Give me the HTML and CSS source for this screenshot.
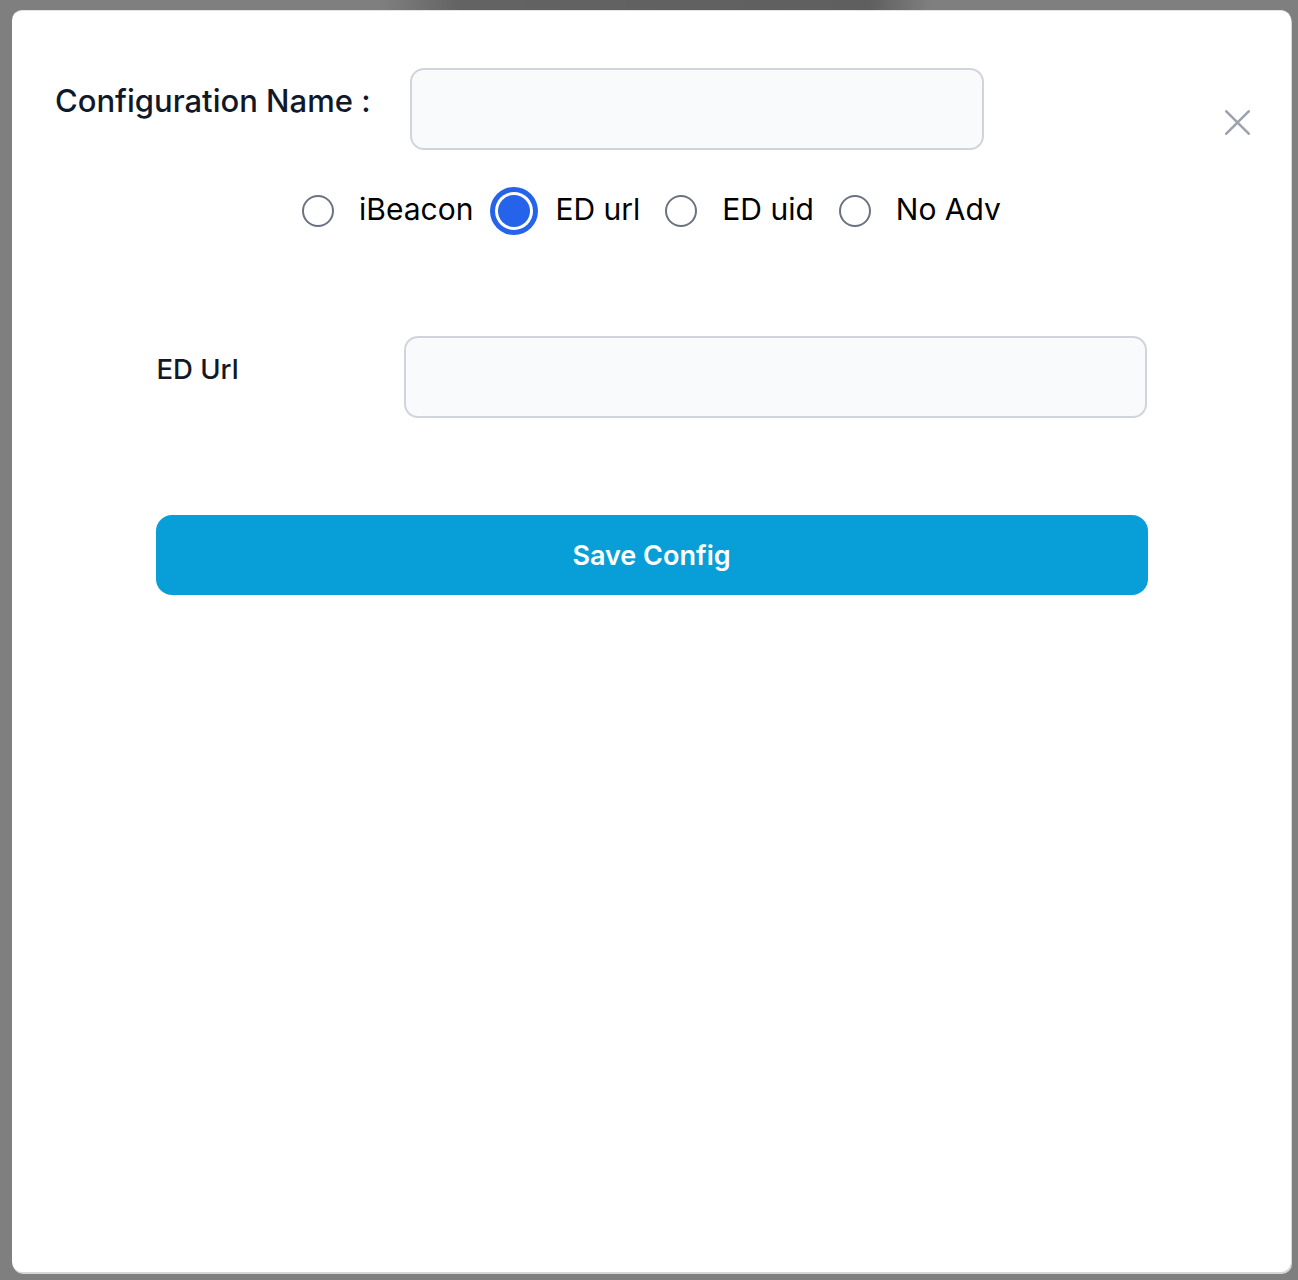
FILE: index.html
```html
<!DOCTYPE html>
<html lang="en">
<head>
<meta charset="utf-8">
<title>Configuration</title>
<link rel="stylesheet" href="styles.css">
</head>
<body>
<div class="modal">
  <div class="head-row">
    <label class="name-label" for="cfgname">Configuration Name :</label>
    <input class="field name-field" id="cfgname" type="text">
    <button class="close-btn" type="button" aria-label="Close">
      <svg width="25" height="25" viewBox="0 0 25 25"><path d="M1.3 1.3 L23.7 23.7 M23.7 1.3 L1.3 23.7" stroke="#9ca3af" stroke-width="2.6" stroke-linecap="round" fill="none"/></svg>
    </button>
  </div>
  <div class="radio-row">
    <span class="radio"></span><span class="radio-text">iBeacon</span>
    <span class="radio checked"></span><span class="radio-text">ED url</span>
    <span class="radio"></span><span class="radio-text">ED uid</span>
    <span class="radio"></span><span class="radio-text">No Adv</span>
  </div>
  <div class="form">
    <div class="url-row">
      <label class="url-label" for="edurl">ED Url</label>
      <input class="field url-field" id="edurl" type="text">
    </div>
    <button class="save-btn" type="button">Save Config</button>
  </div>
</div>
</body>
</html>
```
FILE: styles.css
```css
* { box-sizing: border-box; }
html, body { height: 100%; }
body {
  margin: 0;
  font-family: Inter, "Noto Sans", "Liberation Sans", sans-serif;
  background:
    linear-gradient(to right, rgba(0,0,0,0) 380px, rgba(0,0,0,0.22) 460px, rgba(0,0,0,0.25) 870px, rgba(0,0,0,0) 930px) top left / 100% 10px no-repeat,
    #7f7f7f;
  overflow: hidden;
}
.modal {
  margin: 10px 0 0 12px;
  width: 1279px;
  height: 1262px;
  background: #ffffff;
  border-radius: 10px;
  border-top: 1px solid #e3e5e8;
  box-shadow: 1px 2px 0 #d6d6d6;
  padding-top: 57px;
}
.head-row {
  display: flex;
  align-items: flex-start;
  padding-left: 43px;
  padding-right: 41px;
}
.name-label {
  width: 355px;
  font-size: 31px;
  font-weight: 500;
  color: #111827;
  line-height: 40px;
  margin-top: 13px;
}
.field {
  display: block;
  height: 82px;
  background: #f9fafb;
  border: 2px solid #d1d5db;
  border-radius: 14px;
  outline: none;
  font-family: inherit;
  font-size: 28px;
}
.name-field { width: 574px; }
.close-btn {
  margin-left: auto;
  margin-top: 42px;
  background: none;
  border: 0;
  padding: 0;
  width: 25px;
  height: 25px;
  display: flex;
}
.radio-row {
  display: flex;
  justify-content: center;
  align-items: center;
  gap: 25px;
  height: 48px;
  margin-top: 36px;
}
.radio {
  width: 32px;
  height: 32px;
  border-radius: 50%;
  border: 2px solid #6b7280;
  flex: none;
  margin-top: 2px;
}
.radio.checked {
  border: 0;
  background: #2563eb;
  box-shadow: 0 0 0 3px #ffffff, 0 0 0 8px #2563eb;
}
.radio-text {
  font-size: 30px;
  color: #000000;
  line-height: 40px;
  margin-top: -2px;
}
.form {
  width: 992px;
  margin: 102px auto 0;
}
.url-row {
  display: grid;
  grid-template-columns: 248px 1fr;
  align-items: start;
}
.url-label {
  font-size: 27.5px;
  font-weight: 500;
  color: #111827;
  line-height: 40px;
  margin-top: 13px;
  padding-left: 1px;
}
.url-field { width: 743px; }
.save-btn {
  display: block;
  width: 992px;
  height: 80px;
  margin-top: 97px;
  border: 0;
  border-radius: 16px;
  background: #089fd9;
  color: #ffffff;
  font-family: inherit;
  font-size: 27px;
  font-weight: 600;
}
```
